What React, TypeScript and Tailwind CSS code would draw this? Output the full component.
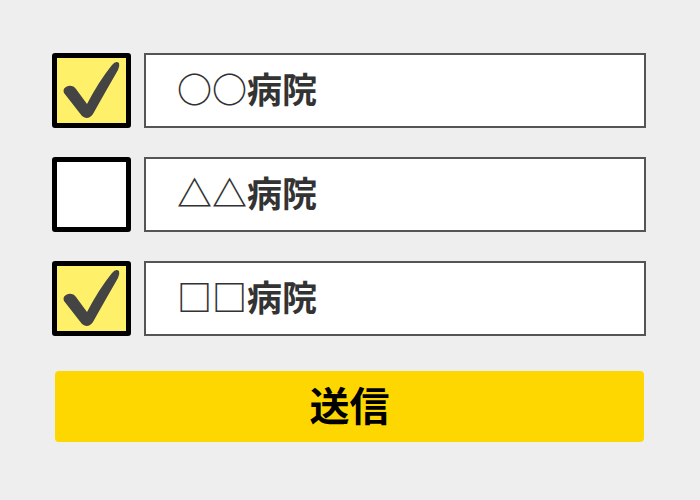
import { useState } from "react";

const hospitals = [
  { id: 1, name: "○○病院", checked: true },
  { id: 2, name: "△△病院", checked: false },
  { id: 3, name: "□□病院", checked: true },
];

function CheckMark() {
  return (
    <svg viewBox="0 0 69 65" className="w-full h-full">
      <path
        d="M7 35 Q5 30 11 28 Q16 27 19 31 L30 46 Q42 23 55 7 Q59 2 62 5 Q63 8 61 12 Q46 38 36 56 Q31 63 25 58 Z"
        fill="#444444"
      />
    </svg>
  );
}

function App() {
  const [items, setItems] = useState(hospitals);

  const toggle = (id: number) =>
    setItems(items.map((h) => (h.id === id ? { ...h, checked: !h.checked } : h)));

  return (
    <div
      className="w-[700px] h-[500px] bg-[#eeeeee] pt-[53px] pl-[52px]"
      style={{ fontFamily: '"Noto Sans CJK JP", "Noto Sans", sans-serif' }}
    >
      <div className="flex flex-col gap-[29px]">
        {items.map((h) => (
          <div key={h.id} className="flex items-center gap-[13px]">
            <div
              onClick={() => toggle(h.id)}
              className={`w-[79px] h-[75px] border-[5px] border-black rounded-[3px] cursor-pointer ${
                h.checked ? "bg-[#fff06a]" : "bg-white"
              }`}
            >
              {h.checked && <CheckMark />}
            </div>
            <div className="w-[502px] h-[75px] border-2 border-[#555555] bg-white flex items-center pl-[31px] pb-[4px] text-[35px] font-bold text-[#333333]">
              {h.name}
            </div>
          </div>
        ))}
      </div>
      <button className="mt-[35px] ml-[3px] w-[589px] h-[71px] bg-[#ffd700] rounded-[4px] flex items-center justify-center pb-[6px] text-[40px] font-bold text-black">
        送信
      </button>
    </div>
  );
}

export default App;
